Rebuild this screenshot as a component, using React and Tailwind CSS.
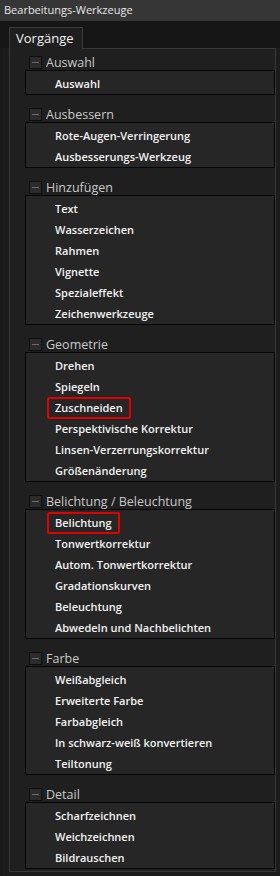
import React from "react";

const sections = [
  { title: "Auswahl", items: ["Auswahl"] },
  { title: "Ausbessern", items: ["Rote-Augen-Verringerung", "Ausbesserungs-Werkzeug"] },
  { title: "Hinzufügen", items: ["Text", "Wasserzeichen", "Rahmen", "Vignette", "Spezialeffekt", "Zeichenwerkzeuge"] },
  { title: "Geometrie", items: ["Drehen", "Spiegeln", "Zuschneiden", "Perspektivische Korrektur", "Linsen-Verzerrungskorrektur", "Größenänderung"] },
  { title: "Belichtung / Beleuchtung", items: ["Belichtung", "Tonwertkorrektur", "Autom. Tonwertkorrektur", "Gradationskurven", "Beleuchtung", "Abwedeln und Nachbelichten"] },
  { title: "Farbe", items: ["Weißabgleich", "Erweiterte Farbe", "Farbabgleich", "In schwarz-weiß konvertieren", "Teiltonung"] },
  { title: "Detail", items: ["Scharfzeichnen", "Weichzeichnen", "Bildrauschen"] },
];

const highlighted = new Set(["Zuschneiden", "Belichtung"]);

function Item({ label }) {
  return (
    <div className="h-[21px] pt-[3px] flex items-center pl-[29px] text-[11px] font-semibold text-[#f2f2f2]">
      {highlighted.has(label) ? (
        <span className="relative">
          {label}
          <span className="absolute -left-[8px] -right-[8px] -top-[3px] -bottom-[3px] border-2 border-[#e00000] rounded-[2px]" />
        </span>
      ) : (
        <span>{label}</span>
      )}
    </div>
  );
}

function Section({ title, items }) {
  return (
    <div className="flex flex-col">
      <div className="h-[14px] flex items-center pl-[4px] mb-[1px]">
        <div className="w-[13px] h-[13px] border border-[#0e0e0e] bg-[#2b2b2b] flex items-center justify-center">
          <div className="w-[7px] h-[1px] bg-[#6a6a6a]" />
        </div>
        <span className="ml-[4px] relative top-[1px] text-[12.5px] leading-none text-[#c9c9c9]">{title}</span>
      </div>
      <div className="border border-[#050505] bg-[#262626] py-[1px]">
        {items.map((it) => (
          <Item key={it} label={it} />
        ))}
      </div>
    </div>
  );
}

export default function App() {
  return (
    <div className="w-[280px] h-[876px] bg-[#1c1c1c] flex flex-col overflow-hidden" style={{ fontFamily: '"Open Sans", "Noto Sans", sans-serif' }}>
      <div className="h-[21px] bg-[#363636] flex items-center pl-[4px] text-[11px] text-[#e6e6e6] shrink-0">
        Bearbeitungs-Werkzeuge
      </div>
      <div className="h-[27px] bg-[#161616] flex items-end pl-[9px] shrink-0">
        <div className="h-[22px] w-[74px] border border-b-0 border-[#3a3a3a] bg-[#1f1f1f] flex items-center pl-[6px] text-[13px] text-[#f0f0f0] relative top-[1px]">
          Vorgänge
        </div>
      </div>
      <div className="flex flex-1 border-l-[3px] border-[#191919]">
        <div className="ml-[6px] w-[267px] h-[824px] border border-[#383838] bg-[#1f1f1f] pt-[6px] pl-[15px] flex flex-col gap-[12px]">
          {sections.map((s) => (
            <Section key={s.title} title={s.title} items={s.items} />
          ))}
        </div>
      </div>
    </div>
  );
}
